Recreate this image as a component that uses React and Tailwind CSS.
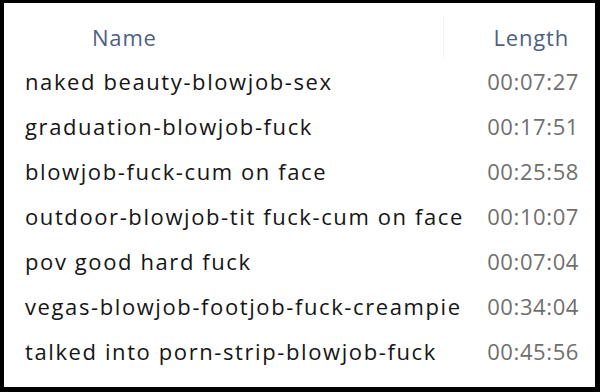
const rows = [
  ["naked beauty-blowjob-sex", "00:07:27"],
  ["graduation-blowjob-fuck", "00:17:51"],
  ["blowjob-fuck-cum on face", "00:25:58"],
  ["outdoor-blowjob-tit fuck-cum on face", "00:10:07"],
  ["pov good hard fuck", "00:07:04"],
  ["vegas-blowjob-footjob-fuck-creampie", "00:34:04"],
  ["talked into porn-strip-blowjob-fuck", "00:45:56"],
];

export default function App() {
  return (
    <div className="w-[600px] h-[392px] bg-black pl-[4px] pt-[3px] pr-[5px] pb-[5px]">
      <div
        className="w-full h-full bg-white flex flex-col"
        style={{ fontFamily: '"Open Sans", "Noto Sans", sans-serif' }}
      >
        {/* column headers */}
        <div className="flex h-[56px] pt-[12px] text-[22px] text-[#4d6185] tracking-[0.8px]">
          <div className="w-[440px] pl-[88px] border-r border-[#f1f3f6] flex items-center">
            Name
          </div>
          <div className="flex-1 flex items-center justify-end pr-[26px]">Length</div>
        </div>

        {/* file rows */}
        <div className="flex flex-col">
          {rows.map(([name, len]) => (
            <div key={name} className="flex h-[45px] items-center text-[22px] tracking-[1.6px]">
              <div className="flex-1 pl-[21px] text-[#151515]">{name}</div>
              <div className="pr-[16px] text-[#6f6f6f] tracking-[0.6px]">{len}</div>
            </div>
          ))}
        </div>
      </div>
    </div>
  );
}
